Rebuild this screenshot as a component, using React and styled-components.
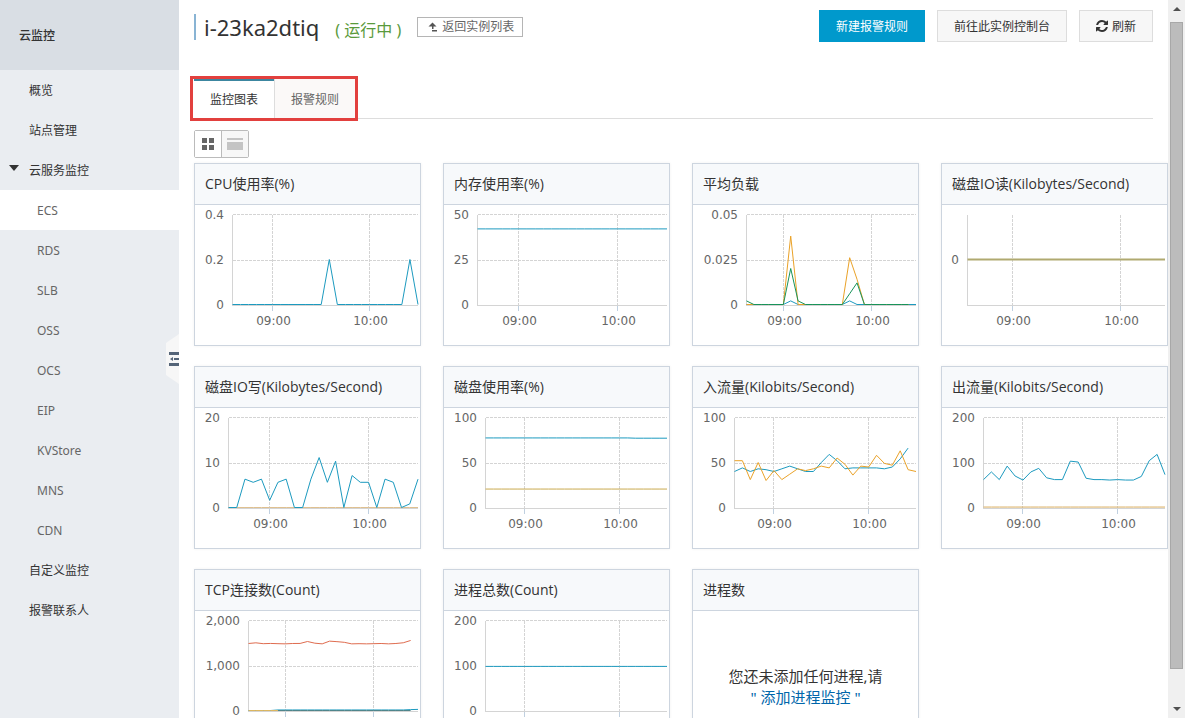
import React, { useState } from 'react';
import styled, { createGlobalStyle, css } from 'styled-components';

const GlobalStyle = createGlobalStyle`
	*,
	*::before,
	*::after {
		box-sizing: border-box;
	}

	body {
		margin: 0;
		background-color: #fff;
		color: #333;
		font-family: 'Noto Sans', 'Noto Sans CJK SC', sans-serif;
		font-size: 12px;
	}

	button {
		font: inherit;
		color: inherit;
		cursor: pointer;
	}

	a {
		color: inherit;
		text-decoration: none;
	}
`;

const Page = styled.div`
	display: flex;
	height: 100vh;
	overflow: hidden;
`;

/* Sidebar */

const Sidebar = styled.aside`
	position: relative;
	flex: 0 0 179px;
	background-color: #eaedf1;
`;

const SidebarTitle = styled.div`
	display: flex;
	align-items: center;
	height: 70px;
	padding-left: 19px;
	background-color: #d9dee4;
	font-weight: 500;
`;

const Menu = styled.ul`
	margin: 0;
	padding: 0;
	list-style: none;
`;

const MenuLink = styled.a`
	display: flex;
	align-items: center;
	height: 40px;
	padding-left: ${(props) => (props.$sub ? '37px' : '29px')};
	color: ${(props) => (props.$sub ? '#666' : '#333')};
	background-color: ${(props) => (props.$active ? '#fff' : 'transparent')};

	${(props) =>
		props.$open &&
		css`
			padding-left: 9px;

			&::before {
				content: '';
				margin: 0 10px 4px 0;
				border: 5px solid transparent;
				border-top: 6px solid #333;
				border-bottom: 0;
			}
		`}
`;

const CollapseButton = styled.button`
	position: absolute;
	top: 50%;
	right: 0;
	width: 13px;
	height: 50px;
	padding: 0;
	border: 0;
	background: none;
	transform: translateY(-50%);

	svg {
		display: block;
	}
`;

/* Content */

const Content = styled.main`
	flex: 1;
	min-width: 0;
	padding: 10px 0 20px 15px;
	overflow: hidden;
`;

const Header = styled.header`
	display: flex;
	align-items: center;
	height: 32px;
	margin-right: 15px;
`;

const Title = styled.h1`
	height: 26px;
	margin: 2px 0 0;
	padding-left: 8px;
	border-left: 2px solid #89b4d4;
	font-size: 22px;
	font-weight: 400;
	line-height: 26px;
`;

const Status = styled.span`
	margin: 8px 16px 0;
	color: #5a9a3c;
	font-size: 16px;
	line-height: 22px;
`;

const BackLink = styled.a`
	display: flex;
	align-items: center;
	gap: 4px;
	height: 20px;
	margin-top: 2px;
	padding: 0 8px 0 10px;
	border: 1px solid #b5b5b5;
	color: #666;
	line-height: 18px;
`;

const Actions = styled.div`
	display: flex;
	gap: 12px;
	margin-left: auto;
`;

const Button = styled.button`
	display: flex;
	align-items: center;
	gap: 4px;
	height: 32px;
	padding: 0 16px;
	border: 1px solid ${(props) => (props.$primary ? '#09c' : '#ddd')};
	background-color: ${(props) => (props.$primary ? '#09c' : '#f7f7f7')};
	color: ${(props) => (props.$primary ? '#fff' : '#333')};
`;

const TabBar = styled.div`
	margin: 37px 15px 0 0;
	border-bottom: 1px solid #ddd;
`;

const Tabs = styled.div`
	position: relative;
	display: inline-flex;
	vertical-align: top;

	&::after {
		content: '';
		position: absolute;
		inset: -3px -3px -3px -4px;
		border: 3px solid #e2403e;
		pointer-events: none;
	}
`;

const Tab = styled.button`
	height: 39px;
	padding: 2px 16px;
	border: 0;
	background-color: #fbf9f8;
	color: #666;

	& + & {
		border-left: 1px solid #ddd;
	}

	&[aria-selected='true'] {
		padding-top: 0;
		border-top: 2px solid #3c86a0;
		background-color: #fff;
		color: #333;
	}
`;

const ViewSwitch = styled.div`
	display: inline-flex;
	height: 28px;
	margin-top: 11px;
	border: 1px solid #bbb;
	border-radius: 2px;
	vertical-align: top;
`;

const ViewButton = styled.button`
	display: flex;
	align-items: center;
	justify-content: center;
	width: 26px;
	padding: 0;
	border: 0;
	background-color: ${(props) => (props.$active ? '#fff' : '#f7f7f7')};

	& + & {
		width: 27px;
		border-left: 1px solid #bbb;
	}
`;

const Grid = styled.section`
	display: grid;
	grid-template-columns: repeat(auto-fill, minmax(220px, 1fr));
	gap: 20px 22px;
	margin-top: 5px;
`;

const Card = styled.article`
	display: flex;
	flex-direction: column;
	min-height: 183px;
	border: 1px solid #cdd5df;
	box-shadow: 0 0 3px rgba(0, 0, 0, 0.06);
`;

const CardTitle = styled.h2`
	height: 41px;
	margin: 0;
	padding: 0 10px;
	border-bottom: 1px solid #cdd5df;
	background-color: #f7f9fb;
	font-family: 'Open Sans', 'Noto Sans CJK SC', sans-serif;
	font-size: 14px;
	font-weight: 400;
	line-height: 40px;
	white-space: nowrap;
`;

const Chart = styled.svg`
	display: block;
	width: 100%;

	text {
		fill: #666;
		font-family: 'DejaVu Sans', sans-serif;
		font-size: 12px;
	}
`;

const Empty = styled.div`
	flex: 1;
	padding-top: 55px;
	font-size: 15px;
	line-height: 21px;
	text-align: center;

	a {
		display: block;
		color: #06a;
	}
`;

const Scrollbar = styled.div`
	display: flex;
	flex: 0 0 17px;
	flex-direction: column;
	align-items: center;
	background-color: #f0f0f0;
`;

const ScrollArrow = styled.span`
	display: flex;
	align-items: center;
	justify-content: center;
	height: 22px;
	padding: ${(props) => (props.$down ? '4px 0 0' : '0 0 4px')};

	&::before {
		content: '';
		border: 4px solid transparent;
		${(props) => (props.$down ? 'border-top-color' : 'border-bottom-color')}: #505050;
		${(props) => (props.$down ? 'border-bottom' : 'border-top')}: 0;
	}
`;

const ScrollTrack = styled.div`
	flex: 1;
	width: 13px;
`;

const ScrollThumb = styled.div`
	height: 96%;
	border: 1px solid #a8a8a8;
	background-color: #bcbcbc;
`;

const BLUE = '#1c9abf';
const ORANGE = '#eaa228';
const GREEN = '#17935a';
const RED = '#df6c4f';

const zeros = (length) => Array(length).fill(0);

const charts = [
	{
		title: 'CPU使用率(%)',
		left: 37,
		labels: ['0.4', '0.2', '0'],
		max: 0.4,
		series: [
			{ color: BLUE, data: [...zeros(12), 0.2, ...zeros(9), 0.2, 0] },
		],
	},
	{
		title: '内存使用率(%)',
		left: 33,
		labels: ['50', '25', '0'],
		max: 50,
		series: [{ color: BLUE, data: Array(24).fill(42) }],
	},
	{
		title: '平均负载',
		left: 53,
		labels: ['0.05', '0.025', '0'],
		max: 0.05,
		series: [
			{
				color: BLUE,
				data: [...zeros(6), 0.002, ...zeros(7), 0.002, ...zeros(9)],
			},
			{
				color: ORANGE,
				data: [...zeros(6), 0.038, ...zeros(7), 0.026, 0.014, ...zeros(7)],
			},
			{
				color: GREEN,
				data: [0.002, ...zeros(5), 0.02, 0.002, ...zeros(6), 0.006, 0.012, ...zeros(7)],
			},
		],
	},
	{
		title: '磁盘IO读(Kilobytes/Second)',
		left: 25,
		labels: [null, '0', null],
		min: -1,
		max: 1,
		points: 23,
		series: [{ color: '#b0a970', width: 2, data: zeros(23) }],
	},
	{
		title: '磁盘IO写(Kilobytes/Second)',
		left: 33,
		labels: ['20', '10', '0'],
		max: 20,
		series: [
			{ color: '#dfc090', data: zeros(24) },
			{
				color: BLUE,
				data: [
					0, 0, 6.3, 5.6, 6.3, 1.6, 5.6, 6.3, 0, 0, 6.3, 11.1,
					5.6, 10.3, 0, 7.1, 5.6, 5.6, 0, 6.3, 5.6, 0, 0.8, 6.3,
				],
			},
		],
	},
	{
		title: '磁盘使用率(%)',
		left: 41,
		labels: ['100', '50', '0'],
		max: 100,
		series: [
			{ color: BLUE, data: [...Array(19).fill(77.3), ...Array(5).fill(77)] },
			{ color: '#c9a94f', data: Array(24).fill(20.5) },
		],
	},
	{
		title: '入流量(Kilobits/Second)',
		left: 41,
		labels: ['100', '50', '0'],
		max: 100,
		series: [
			{
				color: BLUE,
				data: [
					40, 44, 40, 43, 42, 40, 43, 46, 43, 40, 40, 50,
					59, 52, 43, 44, 44, 44, 44, 43, 45, 54, 66,
				],
			},
			{
				color: ORANGE,
				data: [
					52, 52, 31, 50, 30, 41, 31, 37, 43, 41, 43, 46,
					44, 55, 48, 36, 46, 45, 58, 49, 47, 63, 42, 40,
				],
			},
		],
	},
	{
		title: '出流量(Kilobits/Second)',
		left: 41,
		labels: ['200', '100', '0'],
		max: 200,
		series: [
			{
				color: BLUE,
				data: [
					62, 79, 62, 92, 70, 61, 79, 87, 66, 62, 62, 103,
					101, 65, 62, 62, 61, 62, 61, 61, 69, 104, 118, 73,
				],
			},
			{ color: '#d9ae5f', data: Array(24).fill(1) },
		],
	},
	{
		title: 'TCP连接数(Count)',
		left: 53,
		labels: ['2,000', '1,000', '0'],
		max: 2000,
		series: [
			{ color: BLUE, data: [...zeros(4), ...Array(18).fill(12), 20, 25] },
			{ color: '#dcb660', data: zeros(5) },
			{
				color: RED,
				data: [
					1489, 1504, 1485, 1490, 1485, 1481, 1489, 1490, 1533, 1496, 1481, 1541,
					1530, 1515, 1481, 1485, 1481, 1485, 1489, 1481, 1489, 1505, 1556,
				],
			},
			{ color: '#4f858b', from: 4, data: zeros(19) },
		],
	},
	{
		title: '进程总数(Count)',
		left: 41,
		labels: ['200', '100', '0'],
		max: 200,
		series: [{ color: BLUE, data: Array(24).fill(98) }],
	},
];

const menu = [
	{ label: '概览' },
	{ label: '站点管理' },
	{ label: '云服务监控', open: true },
	{ label: 'ECS', sub: true, active: true },
	{ label: 'RDS', sub: true },
	{ label: 'SLB', sub: true },
	{ label: 'OSS', sub: true },
	{ label: 'OCS', sub: true },
	{ label: 'EIP', sub: true },
	{ label: 'KVStore', sub: true },
	{ label: 'MNS', sub: true },
	{ label: 'CDN', sub: true },
	{ label: '自定义监控' },
	{ label: '报警联系人' },
];

const TOP = 9.5;
const BOTTOM = 100.5;
const RIGHT = 223;

function LineChart({ title, left, labels, min = 0, max, points = 24, series }) {
	const start = left + 0.5;
	const step = (RIGHT - start) / (points - 1);
	const x = (i) => start + i * step;
	// lines run just above the axis
	const y = (value) => BOTTOM - 1 - ((value - min) / (max - min)) * 90;
	// samples are five minutes apart, 09:00 is the sixth one
	const hours = [
		{ label: '09:00', at: Math.floor(x(5)) + 0.5 },
		{ label: '10:00', at: Math.floor(x(17)) + 0.5 },
	];

	return (
		<Chart viewBox="0 0 225 140" role="img" aria-label={title}>
			<g stroke="#d4d4d4" fill="none" shapeRendering="crispEdges">
				{labels[0] && (
					<path
						d={`M${start} ${TOP}H${RIGHT}M${start} 55.5H${RIGHT}`}
						strokeDasharray="3 1"
					/>
				)}
				{hours.map((hour) => (
					<path
						key={hour.label}
						d={`M${hour.at} ${TOP}V${BOTTOM}`}
						strokeDasharray="3 1"
					/>
				))}
				<path d={`M${start} ${TOP}V${BOTTOM}H${RIGHT}`} />
				{hours.map((hour) => (
					<path
						key={hour.label}
						stroke="#c0d0e0"
						d={`M${hour.at} ${BOTTOM}v5`}
					/>
				))}
			</g>
			{series.map((line) => (
				<polyline
					key={line.color}
					fill="none"
					stroke={line.color}
					strokeWidth={line.width || 1}
					strokeLinejoin="round"
					points={line.data
						.map((value, i) => `${x(i + (line.from || 0))},${y(value)}`)
						.join(' ')}
				/>
			))}
			{labels.map(
				(label, i) =>
					label && (
						<text key={label} x={left - 8} y={14 + i * 45} textAnchor="end">
							{label}
						</text>
					)
			)}
			{hours.map((hour) => (
				<text key={hour.label} x={hour.at + 1} y="120" textAnchor="middle">
					{hour.label}
				</text>
			))}
		</Chart>
	);
}

const BackIcon = () => (
	<svg width="10" height="10" viewBox="0 0 10 10" fill="#555" aria-hidden="true">
		<path d="M4.5 0.5L8.5 4.5H5.5V7H4V4.5H0.5ZM4 8H9V9.5H4Z" />
	</svg>
);

const RefreshIcon = () => (
	<svg width="12" height="12" viewBox="0 0 1536 1536" fill="#333" aria-hidden="true">
		<path d="M1511 928q0 5-1 7-64 268-268 434.500T764 1536q-146 0-282.500-55T238 1324l-129 129q-19 19-45 19t-45-19-19-45V960q0-26 19-45t45-19h448q26 0 45 19t19 45-19 45l-137 137q71 66 161 102t187 36q134 0 250-65t186-179q11-17 53-117 8-23 30-23h192q13 0 22.500 9.500t9.500 22.500zM1536 128v448q0 26-19 45t-45 19h-448q-26 0-45-19t-19-45 19-45l138-138Q969 256 768 256q-134 0-250 65T332 500q-11 17-53 117-8 23-30 23H50q-13 0-22.500-9.500T18 608v-7q65-268 270-434.500T768 0q146 0 284 55.500T1297 212l130-129q19-19 45-19t45 19 19 45z" />
	</svg>
);

export default function App() {
	const [tab, setTab] = useState('监控图表');

	return (
		<>
			<GlobalStyle />
			<Page>
				<Sidebar>
					<SidebarTitle>云监控</SidebarTitle>
					<nav>
						<Menu>
							{menu.map((item) => (
								<li key={item.label}>
									<MenuLink
										href="#"
										$sub={item.sub}
										$active={item.active}
										$open={item.open}
									>
										{item.label}
									</MenuLink>
								</li>
							))}
						</Menu>
					</nav>
					<CollapseButton aria-label="收起菜单">
						<svg width="13" height="50" viewBox="0 0 13 50">
							<path d="M13 0V50L0 41V9Z" fill="#f7f7f7" />
							<path
								d="M3 18h10v3H3zM8 24h5v2H8zM3 29h10v3H3zM4 25l3-2v4z"
								fill="#546478"
							/>
						</svg>
					</CollapseButton>
				</Sidebar>

				<Content>
					<Header>
						<Title>i-23ka2dtiq</Title>
						<Status>( 运行中 )</Status>
						<BackLink href="#">
							<BackIcon />
							返回实例列表
						</BackLink>
						<Actions>
							<Button $primary>新建报警规则</Button>
							<Button>前往此实例控制台</Button>
							<Button>
								<RefreshIcon />
								刷新
							</Button>
						</Actions>
					</Header>

					<TabBar>
						<Tabs role="tablist">
							{['监控图表', '报警规则'].map((name) => (
								<Tab
									key={name}
									role="tab"
									aria-selected={tab === name}
									onClick={() => setTab(name)}
								>
									{name}
								</Tab>
							))}
						</Tabs>
					</TabBar>

					<ViewSwitch>
						<ViewButton $active aria-label="网格">
							<svg width="12" height="12" fill="#666">
								<path d="M0 0h5v5H0zM7 0h5v5H7zM0 7h5v5H0zM7 7h5v5H7z" />
							</svg>
						</ViewButton>
						<ViewButton aria-label="列表">
							<svg width="16" height="12" fill="#c4c4c4">
								<path d="M0 0h16v2H0zM0 4h16v8H0z" />
							</svg>
						</ViewButton>
					</ViewSwitch>

					<Grid>
						{charts.map((chart) => (
							<Card key={chart.title}>
								<CardTitle>{chart.title}</CardTitle>
								<LineChart {...chart} />
							</Card>
						))}
						<Card>
							<CardTitle>进程数</CardTitle>
							<Empty>
								您还未添加任何进程,请
								<a href="#">&quot; 添加进程监控 &quot;</a>
							</Empty>
						</Card>
					</Grid>
				</Content>

				<Scrollbar aria-hidden="true">
					<ScrollArrow />
					<ScrollTrack>
						<ScrollThumb />
					</ScrollTrack>
					<ScrollArrow $down />
				</Scrollbar>
			</Page>
		</>
	);
}
